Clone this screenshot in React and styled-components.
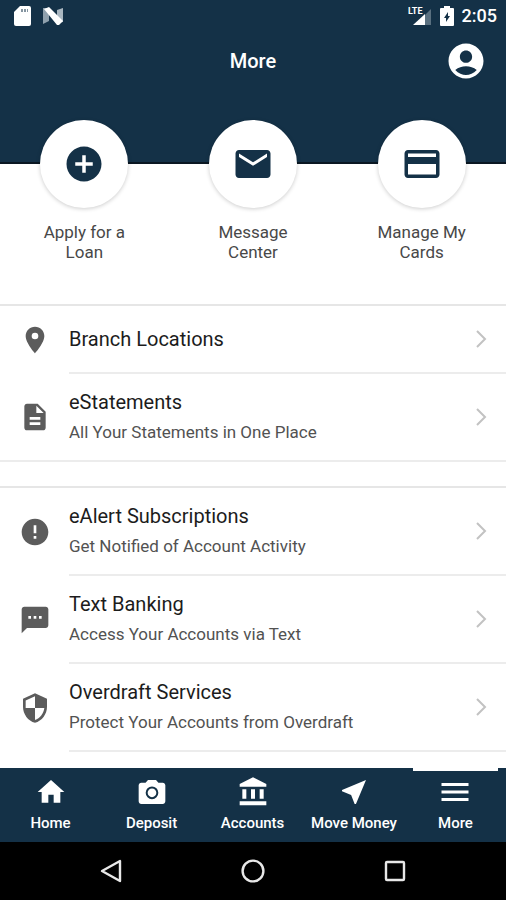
import React, { useState } from "react";
import styled, { createGlobalStyle } from "styled-components";
import {
  MdAccountBalance,
  MdAccountCircle,
  MdAddCircle,
  MdCreditCard,
  MdDescription,
  MdEmail,
  MdError,
  MdHome,
  MdMenu,
  MdNearMe,
  MdPlace,
  MdSecurity,
  MdSms,
} from "react-icons/md";

const GlobalStyle = createGlobalStyle`
  * {
    box-sizing: border-box;
  }

  body {
    margin: 0;
    background: #ffffff;
    font-family: Roboto, "Liberation Sans", sans-serif;
  }

  button {
    margin: 0;
    padding: 0;
    border: 0;
    background: none;
    color: inherit;
    font: inherit;
    cursor: pointer;
  }

  svg {
    display: block;
    flex: none;
  }
`;

const Container = styled.div`
  display: flex;
  flex-direction: column;
  min-height: 100vh;
`;

const Header = styled.header`
  height: 164px;
  background: #143147;
  border-bottom: 2px solid #0a1722;
  color: #ffffff;
`;

const StatusBar = styled.div`
  display: flex;
  justify-content: space-between;
  align-items: center;
  height: 32px;
  padding: 0 9px 0 14px;
`;

const StatusGroup = styled.div`
  display: flex;
  align-items: center;
  gap: ${(props) => props.$gap}px;
`;

const Clock = styled.span`
  font-size: 18px;
  font-weight: 500;
  line-height: 20px;
`;

const AppBar = styled.div`
  display: grid;
  grid-template-columns: 1fr auto 1fr;
  align-items: center;
  height: 58px;
  padding: 0 19px;
`;

const Title = styled.h1`
  grid-column: 2;
  margin: 0;
  font-size: 20px;
  font-weight: 500;
  line-height: 24px;
`;

const ProfileButton = styled.button`
  justify-self: end;
`;

const Main = styled.main`
  flex: 1;
`;

const QuickActions = styled.section`
  display: grid;
  grid-template-columns: repeat(3, 1fr);
  height: 184px;
  margin-top: -44px;
`;

const QuickAction = styled.button`
  display: flex;
  flex-direction: column;
  align-items: center;
  gap: 14px;
`;

const Circle = styled.span`
  display: flex;
  justify-content: center;
  align-items: center;
  width: 88px;
  height: 88px;
  border-radius: 50%;
  background: #ffffff;
  box-shadow: 0 1px 4px rgba(0, 0, 0, 0.2);
  color: #143147;
`;

const QuickLabel = styled.span`
  width: 96px;
  color: #484848;
  font-size: 17px;
  line-height: 20px;
  text-align: center;
`;

const List = styled.ul`
  margin: 0;
  padding: 0;
  list-style: none;
  border-top: 2px solid #e6e6e6;
  border-bottom: ${(props) => (props.$open ? "0" : "2px solid #ececec")};

  & + & {
    margin-top: 24px;
  }
`;

const Row = styled.button`
  display: flex;
  width: 100%;
  text-align: left;
`;

const RowIcon = styled.span`
  display: flex;
  align-self: center;
  justify-content: center;
  width: 69px;
  color: #5c5c5c;
`;

const RowBody = styled.span`
  box-sizing: content-box;
  display: flex;
  flex: 1;
  align-items: center;
  justify-content: space-between;
  min-height: ${(props) => (props.$tall ? "86px" : "66px")};
  padding-right: 19px;
  border-bottom: ${(props) => (props.$line ? "2px solid #ececec" : "0")};
`;

const RowTexts = styled.span`
  display: flex;
  flex-direction: column;
  gap: 6px;
`;

const RowTitle = styled.span`
  color: #1c1c1c;
  font-size: 20px;
  line-height: 24px;
`;

const RowText = styled.span`
  color: #525252;
  font-size: 17px;
  line-height: 24px;
`;

const TabBar = styled.nav`
  display: grid;
  grid-template-columns: repeat(5, 1fr);
  height: 74px;
  background: #143147;
`;

const Tab = styled.a`
  display: flex;
  flex-direction: column;
  align-items: center;
  margin: 0 8px;
  border-top: 3px solid ${(props) => (props.$active ? "#ffffff" : "transparent")};
  color: #ffffff;
  font-size: 15px;
  font-weight: 500;
  line-height: 20px;
  text-decoration: none;
  white-space: nowrap;
`;

const TabIcon = styled.span`
  display: flex;
  align-items: center;
  height: 42px;
`;

const SystemBar = styled.footer`
  display: grid;
  grid-template-columns: repeat(3, 1fr);
  height: 58px;
  padding: 0 40px;
  background: #000000;
`;

const SystemButton = styled.button`
  display: flex;
  justify-content: center;
  align-items: center;
`;

const SdCardIcon = () => (
  <svg width="17" height="20" viewBox="0 0 17 20" aria-hidden="true">
    <path
      d="M6 0h9a2 2 0 0 1 2 2v16a2 2 0 0 1-2 2H2a2 2 0 0 1-2-2V6z"
      fill="#ffffff"
    />
    <path d="M7 3h2v3H7zM10 3h2v3h-2zM13 3h1v3h-1z" fill="#8595a1" />
  </svg>
);

const NougatIcon = () => (
  <svg width="20" height="18" viewBox="0 0 20 18" aria-hidden="true">
    <path d="M0 1h6v13l-6 3z" fill="#8fa0ad" />
    <path d="M14 3l6-2v14l-6 1z" fill="#a9b6c0" />
    <path d="M1 2l5-2 14 14-4 4h-2z" fill="#ffffff" />
  </svg>
);

const SignalIcon = () => (
  <svg width="24" height="20" viewBox="0 0 24 20" aria-hidden="true">
    <path d="M23 3v16h-6V9z" fill="#5a7080" />
    <path d="M17 8v11H5z" fill="#ffffff" />
    <text
      x="0"
      y="8"
      fill="#ffffff"
      fontFamily="Roboto, sans-serif"
      fontSize="9"
      fontWeight="700"
    >
      LTE
    </text>
  </svg>
);

const BatteryIcon = () => (
  <svg width="14" height="20" viewBox="0 0 14 20" aria-hidden="true">
    <path
      d="M4 0h6v2h3a1 1 0 0 1 1 1v16a1 1 0 0 1-1 1H1a1 1 0 0 1-1-1V3a1 1 0 0 1 1-1h3z"
      fill="#ffffff"
    />
    <path d="M8 6l-4 6h2v4l4-6H8z" fill="#143147" />
  </svg>
);

const CameraIcon = ({ size }) => (
  <svg width={size} height={size} viewBox="0 0 24 24" aria-hidden="true">
    <path
      d="M9 3L7.17 5H4c-1.1 0-2 .9-2 2v12c0 1.1.9 2 2 2h16c1.1 0 2-.9 2-2V7c0-1.1-.9-2-2-2h-3.17L15 3z"
      fill="currentColor"
    />
    <circle
      cx="12"
      cy="12.6"
      r="4"
      fill="none"
      stroke="#143147"
      strokeWidth="1.5"
    />
  </svg>
);

const Chevron = () => (
  <svg width="12" height="18" viewBox="0 0 12 18" aria-hidden="true">
    <path d="M2 1l8 8-8 8" fill="none" stroke="#c2c2c2" strokeWidth="2" />
  </svg>
);

const BackIcon = () => (
  <svg width="24" height="26" viewBox="0 0 24 26" aria-hidden="true">
    <path
      d="M21 3v20L3 13z"
      fill="none"
      stroke="#e8e8e8"
      strokeWidth="2.4"
      strokeLinejoin="round"
    />
  </svg>
);

const CircleIcon = () => (
  <svg width="26" height="26" viewBox="0 0 26 26" aria-hidden="true">
    <circle
      cx="13"
      cy="13"
      r="10.4"
      fill="none"
      stroke="#e8e8e8"
      strokeWidth="2.4"
    />
  </svg>
);

const SquareIcon = () => (
  <svg width="24" height="24" viewBox="0 0 24 24" aria-hidden="true">
    <rect
      x="3"
      y="3"
      width="18"
      height="18"
      rx="1"
      fill="none"
      stroke="#e8e8e8"
      strokeWidth="2.4"
    />
  </svg>
);

const quickActions = [
  { label: "Apply for a Loan", icon: MdAddCircle },
  { label: "Message Center", icon: MdEmail },
  { label: "Manage My Cards", icon: MdCreditCard },
];

const branchItems = [
  { title: "Branch Locations", icon: MdPlace },
  {
    title: "eStatements",
    text: "All Your Statements in One Place",
    icon: MdDescription,
  },
];

const serviceItems = [
  {
    title: "eAlert Subscriptions",
    text: "Get Notified of Account Activity",
    icon: MdError,
  },
  {
    title: "Text Banking",
    text: "Access Your Accounts via Text",
    icon: MdSms,
  },
  {
    title: "Overdraft Services",
    text: "Protect Your Accounts from Overdraft",
    icon: MdSecurity,
  },
];

const tabs = [
  { label: "Home", icon: MdHome, size: 32 },
  { label: "Deposit", icon: CameraIcon, size: 32 },
  { label: "Accounts", icon: MdAccountBalance, size: 32 },
  { label: "Move Money", icon: MdNearMe, size: 32 },
  { label: "More", icon: MdMenu, size: 36 },
];

function MenuList({ items, open }) {
  return (
    <List $open={open}>
      {items.map((item, index) => {
        const line = open || index < items.length - 1;

        return (
          <li key={item.title}>
            <Row type="button">
              <RowIcon>
                <item.icon size={32} />
              </RowIcon>
              <RowBody $tall={Boolean(item.text)} $line={line}>
                <RowTexts>
                  <RowTitle>{item.title}</RowTitle>
                  {item.text && <RowText>{item.text}</RowText>}
                </RowTexts>
                <Chevron />
              </RowBody>
            </Row>
          </li>
        );
      })}
    </List>
  );
}

function App() {
  const [activeTab, setActiveTab] = useState("More");

  return (
    <Container>
      <GlobalStyle />
      <Header>
        <StatusBar>
          <StatusGroup $gap={12}>
            <SdCardIcon />
            <NougatIcon />
          </StatusGroup>
          <StatusGroup $gap={8}>
            <SignalIcon />
            <BatteryIcon />
            <Clock>2:05</Clock>
          </StatusGroup>
        </StatusBar>
        <AppBar>
          <Title>More</Title>
          <ProfileButton type="button" aria-label="Profile">
            <MdAccountCircle size={42} />
          </ProfileButton>
        </AppBar>
      </Header>
      <Main>
        <QuickActions>
          {quickActions.map((action) => (
            <QuickAction key={action.label} type="button">
              <Circle>
                <action.icon size={42} />
              </Circle>
              <QuickLabel>{action.label}</QuickLabel>
            </QuickAction>
          ))}
        </QuickActions>
        <MenuList items={branchItems} />
        <MenuList items={serviceItems} open />
      </Main>
      <TabBar>
        {tabs.map((tab) => (
          <Tab
            key={tab.label}
            href="#"
            $active={tab.label === activeTab}
            onClick={() => setActiveTab(tab.label)}
          >
            <TabIcon>
              <tab.icon size={tab.size} />
            </TabIcon>
            {tab.label}
          </Tab>
        ))}
      </TabBar>
      <SystemBar>
        <SystemButton type="button" aria-label="Back">
          <BackIcon />
        </SystemButton>
        <SystemButton type="button" aria-label="Home screen">
          <CircleIcon />
        </SystemButton>
        <SystemButton type="button" aria-label="Recent apps">
          <SquareIcon />
        </SystemButton>
      </SystemBar>
    </Container>
  );
}

export default App;
